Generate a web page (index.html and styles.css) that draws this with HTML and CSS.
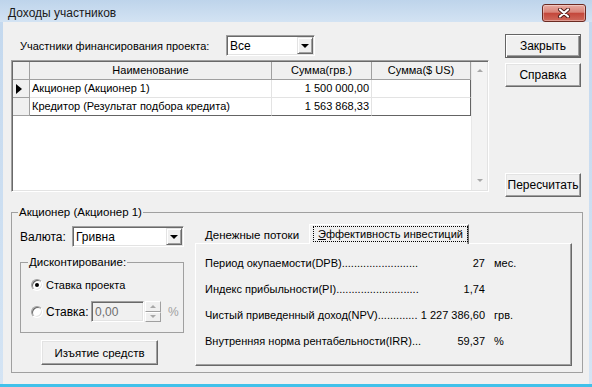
FILE: index.html
```html
<!DOCTYPE html>
<html lang="ru">
<head>
  <meta charset="utf-8">
  <title>Доходы участников</title>
  <link rel="stylesheet" href="styles.css">
</head>
<body>
  <div class="window">
    <div class="titlebar">
      <span class="title">Доходы участников</span>
      <button class="close-btn" title="Закрыть">
        <svg width="14" height="10" viewBox="0 0 14 10">
          <path d="M3 1.5 L11 8.5 M11 1.5 L3 8.5" stroke="#4a1a16" stroke-width="4" stroke-linecap="round"/>
          <path d="M3 1.5 L11 8.5 M11 1.5 L3 8.5" stroke="#fff" stroke-width="2.2" stroke-linecap="round"/>
        </svg>
      </button>
    </div>

    <div class="client">
      <div class="top">
        <div class="top-main">
          <div class="filter-row">
            <span class="filter-label">Участники финансирования проекта:</span>
            <div class="combo combo-all">
              <span class="combo-text">Все</span>
              <span class="combo-btn"><span class="arrow-down"></span></span>
            </div>
          </div>

          <div class="grid">
            <div class="grid-body">
              <div class="grid-row grid-head">
                <div class="cell ind"></div>
                <div class="cell">Наименование</div>
                <div class="cell">Сумма(грв.)</div>
                <div class="cell">Сумма($ US)</div>
              </div>
              <div class="grid-row">
                <div class="cell ind"><span class="row-mark"></span></div>
                <div class="cell name">Акционер (Акционер 1)</div>
                <div class="cell num">1 500 000,00</div>
                <div class="cell num last"></div>
              </div>
              <div class="grid-row last-row">
                <div class="cell ind"></div>
                <div class="cell name">Кредитор (Результат подбора кредита)</div>
                <div class="cell num">1 563 868,33</div>
                <div class="cell num last"></div>
              </div>
            </div>
            <div class="vscroll">
              <span class="sarrow up"></span>
              <span class="sarrow down"></span>
            </div>
          </div>
        </div>

        <div class="side">
          <button class="btn btn-default">Закрыть</button>
          <button class="btn btn-help">Справка</button>
          <button class="btn btn-recalc">Пересчитать</button>
        </div>
      </div>

      <fieldset class="group">
        <legend>Акционер (Акционер 1)</legend>

        <div class="owner-left">
          <div class="currency-row">
            <span class="currency-label">Валюта:</span>
            <div class="combo combo-currency">
              <span class="combo-text">Гривна</span>
              <span class="combo-btn"><span class="arrow-down"></span></span>
            </div>
          </div>

          <fieldset class="discount">
            <legend>Дисконтирование:</legend>
            <div class="radio-row">
              <span class="radio checked"></span>
              <span>Ставка проекта</span>
            </div>
            <div class="radio-row rate-row">
              <span class="radio"></span>
              <span class="rate-label">Ставка:</span>
              <div class="rate-edit">0,00</div>
              <div class="spin">
                <span class="spin-btn"><span class="sarrow up"></span></span>
                <span class="spin-btn"><span class="sarrow down"></span></span>
              </div>
              <span class="pct">%</span>
            </div>
          </fieldset>

          <button class="btn btn-withdraw">Изъятие средств</button>
        </div>

        <div class="tabs">
          <div class="tab-strip">
            <div class="tab"><u>Д</u>енежные потоки</div>
            <div class="tab tab-active"><span class="focus"><u>Э</u>ффективность инвестиций</span></div>
          </div>
          <div class="tab-page">
            <div class="metric">
              <span class="m-name">Период окупаемости(DPB).........................</span>
              <span class="m-val">27</span>
              <span class="m-unit">мес.</span>
            </div>
            <div class="metric">
              <span class="m-name">Индекс прибыльности(PI)...........................</span>
              <span class="m-val">1,74</span>
              <span class="m-unit"></span>
            </div>
            <div class="metric">
              <span class="m-name">Чистый приведенный доход(NPV).............</span>
              <span class="m-val">1 227 386,60</span>
              <span class="m-unit">грв.</span>
            </div>
            <div class="metric">
              <span class="m-name">Внутренняя норма рентабельности(IRR)...</span>
              <span class="m-val">59,37</span>
              <span class="m-unit">%</span>
            </div>
          </div>
        </div>
      </fieldset>
    </div>
  </div>
</body>
</html>
```

FILE: styles.css
```css
body {
  margin: 0;
  font-family: "Liberation Sans", Arial, sans-serif;
  font-size: 11px;
  color: #000;
}

.window {
  width: 592px;
  height: 387px;
  box-sizing: border-box;
  display: flex;
  flex-direction: column;
  background: linear-gradient(#c3d8ee, #d4e4f4);
  border-bottom: 3px solid #41c1ea;
}

/* title bar */

.titlebar {
  height: 22px;
  flex: none;
  display: flex;
  align-items: flex-start;
  padding: 0 6px 0 8px;
  background: linear-gradient(#bed4eb, #d3e3f3);
}

.title {
  font-size: 12px;
  line-height: 27px;
  color: #1a1a1a;
}

.close-btn {
  margin: 4px 0 0 auto;
  width: 44px;
  height: 18px;
  padding: 0;
  border: 1px solid #6b2a22;
  border-radius: 3px;
  background: linear-gradient(#e8aca2 0%, #d98479 45%, #c4473b 52%, #cf6a5c 100%);
  box-shadow: inset 0 0 0 1px rgba(255, 255, 255, 0.35);
  display: flex;
  align-items: center;
  justify-content: center;
}

/* client area */

.client {
  flex: 1;
  margin: 0 3px;
  background: #f0f0f0;
  padding: 12px 8px 0 8px;
}

.top {
  display: flex;
  align-items: flex-start;
  gap: 16px;
}

.top-main {
  width: 478px;
}

.filter-row {
  display: flex;
  align-items: center;
  height: 21px;
  margin: 1px 0 4px 0;
}

.filter-label {
  width: 215px;
  padding-left: 9px;
  box-sizing: border-box;
}

/* combobox */

.combo {
  height: 21px;
  box-sizing: border-box;
  display: flex;
  align-items: center;
  background: #fff;
  border: 1px solid;
  border-color: #a0a0a0 #fff #fff #a0a0a0;
  box-shadow: inset 1px 1px #696969, inset -1px -1px #e3e3e3;
  padding: 1px 1px 1px 2px;
}

.combo-all {
  width: 89px;
}

.combo-text {
  flex: 1;
  padding-left: 1px;
  font-size: 12px;
}

.combo-btn {
  width: 16px;
  height: 17px;
  box-sizing: border-box;
  background: #f0f0f0;
  border: 1px solid;
  border-color: #e3e3e3 #696969 #696969 #e3e3e3;
  box-shadow: inset 1px 1px #fff, inset -1px -1px #a0a0a0;
  display: flex;
  align-items: center;
  justify-content: center;
}

.arrow-down {
  width: 0;
  height: 0;
  border-left: 4px solid transparent;
  border-right: 4px solid transparent;
  border-top: 4px solid #000;
  margin-top: 1px;
}

/* data grid */

.grid {
  height: 132px;
  box-sizing: border-box;
  display: flex;
  background: #fff;
  border: 1px solid;
  border-color: #a0a0a0 #fff #fff #a0a0a0;
  box-shadow: inset 1px 1px #696969, inset -1px -1px #e3e3e3;
  padding: 1px;
}

.grid-body {
  flex: 1;
}

.grid-row {
  display: grid;
  grid-template-columns: 17px 242px 100px 99px;
  height: 18px;
}

.cell {
  box-sizing: border-box;
  border-right: 1px solid #e3e3e3;
  border-bottom: 1px solid #e3e3e3;
  line-height: 17px;
  white-space: nowrap;
  overflow: hidden;
}

.grid-head .cell {
  background: #f0f0f0;
  border-color: #a0a0a0;
  text-align: center;
}

.cell.ind {
  background: #f0f0f0;
  border-color: #a0a0a0;
  display: flex;
  align-items: center;
  padding-left: 3px;
}

.cell.name {
  padding-left: 2px;
}

.cell.num {
  text-align: right;
  padding-right: 2px;
}

.cell.last {
  border-right-color: #646464;
}

.last-row .cell {
  border-bottom-color: #646464;
}

.last-row .cell.ind {
  border-bottom-color: #a0a0a0;
}

.row-mark {
  width: 0;
  height: 0;
  border-top: 5px solid transparent;
  border-bottom: 5px solid transparent;
  border-left: 6px solid #000;
}

.vscroll {
  width: 16px;
  background: #f3f3f3;
  border-left: 1px solid #e8e8e8;
  display: flex;
  flex-direction: column;
  justify-content: space-between;
  align-items: center;
  padding: 7px 0 8px 0;
}

.sarrow {
  width: 0;
  height: 0;
  border-left: 3px solid transparent;
  border-right: 3px solid transparent;
}

.sarrow.up {
  border-bottom: 3px solid #a8a8a8;
}

.sarrow.down {
  border-top: 3px solid #a8a8a8;
}

/* buttons */

.side {
  width: 76px;
  height: 163px;
  display: flex;
  flex-direction: column;
}

.btn {
  height: 24px;
  box-sizing: border-box;
  padding: 0;
  font-family: inherit;
  font-size: 12px;
  color: #000;
  background: #f0f0f0;
  border: 1px solid;
  border-color: #fff #696969 #696969 #fff;
  box-shadow: inset -1px -1px #a0a0a0, inset 1px 1px #e3e3e3;
}

.btn-default {
  border-color: #646464;
  box-shadow: inset 1px 1px #fff, inset -1px -1px #696969, inset -2px -2px #a0a0a0;
}

.btn-help {
  margin-top: 5px;
}

.btn-recalc {
  margin-top: auto;
}

/* group box */

.group {
  margin: 8px 0 0 0;
  width: 572px;
  box-sizing: border-box;
  padding: 0 0 6px 0;
  border: 1px solid #a0a0a0;
  display: flex;
  min-inline-size: 0;
}

.group > legend {
  padding: 0 1px;
  margin-left: 6px;
  line-height: 14px;
  font-size: 11.5px;
}

.owner-left {
  width: 164px;
  margin-left: 8px;
  padding-top: 7px;
}

.currency-row {
  display: flex;
  align-items: center;
}

.currency-label {
  width: 52px;
  font-size: 12px;
}

.combo-currency {
  width: 112px;
}

.discount {
  margin: 8px 0 0 0;
  padding: 0 0 10px 0;
  border: 1px solid #a0a0a0;
  min-inline-size: 0;
}

.discount > legend {
  padding: 0 1px;
  margin-left: 7px;
  line-height: 14px;
  font-size: 11.5px;
}

.radio-row {
  display: flex;
  align-items: center;
  height: 18px;
  margin: 7px 0 0 10px;
  font-size: 11px;
}

.rate-row {
  height: 21px;
}

.radio {
  width: 12px;
  height: 12px;
  box-sizing: border-box;
  border-radius: 50%;
  border: 1px solid;
  border-color: #a0a0a0 #fff #fff #a0a0a0;
  background: #fff;
  box-shadow: inset 1px 1px #696969, inset -1px -1px #e3e3e3;
  margin-right: 3px;
  display: flex;
  align-items: center;
  justify-content: center;
}

.radio.checked::after {
  content: "";
  width: 4px;
  height: 4px;
  border-radius: 50%;
  background: #000;
}

.rate-label {
  width: 45px;
  font-size: 12px;
}

.rate-edit {
  width: 53px;
  height: 21px;
  box-sizing: border-box;
  background: #f0f0f0;
  color: #6d6d6d;
  font-size: 12px;
  border: 1px solid;
  border-color: #a0a0a0 #fff #fff #a0a0a0;
  box-shadow: inset 1px 1px #696969, inset -1px -1px #e3e3e3;
  padding: 3px 0 0 3px;
}

.spin {
  width: 16px;
  height: 21px;
  margin-left: 1px;
  display: flex;
  flex-direction: column;
}

.spin-btn {
  flex: 1;
  box-sizing: border-box;
  background: #f0f0f0;
  border: 1px solid;
  border-color: #fff #a0a0a0 #a0a0a0 #fff;
  display: flex;
  align-items: center;
  justify-content: center;
}

.pct {
  margin-left: 7px;
  color: #a0a0a0;
  font-size: 12px;
}

.btn-withdraw {
  margin: 7px 0 0 21px;
  width: 117px;
  height: 25px;
  font-size: 11.5px;
}

/* tabs */

.tabs {
  width: 377px;
  margin-left: 11px;
  padding-top: 5px;
  font-size: 11px;
}

.tab-strip {
  display: flex;
  height: 19px;
  align-items: flex-end;
}

.tab {
  height: 17px;
  line-height: 17px;
  white-space: nowrap;
}

.tab:first-child {
  width: 112px;
  padding: 1px 0 0 10px;
  box-sizing: border-box;
  font-size: 11.5px;
}

.tab-active {
  width: 160px;
  height: 20px;
  box-sizing: border-box;
  margin: 0 0 -1px 2px;
  position: relative;
  background: #f0f0f0;
  border-top: 1px solid #fff;
  border-left: 1px solid #fff;
  border-right: 1px solid #696969;
  box-shadow: inset -1px 0 #a0a0a0;
  padding: 1px 0 0 3px;
}

.focus {
  display: inline-block;
  line-height: 14px;
  padding: 0 4px;
  border: 1px dotted #000;
}

.tab-page {
  height: 123px;
  box-sizing: border-box;
  border: 1px solid;
  border-color: #fff #696969 #696969 #fff;
  box-shadow: inset -1px -1px #a0a0a0;
  padding: 6px 0 0 9px;
}

.metric {
  display: grid;
  grid-template-columns: 210px 70px auto;
  height: 26px;
  align-items: center;
}

.m-name {
  white-space: nowrap;
}

.m-val {
  text-align: right;
}

.m-unit {
  padding-left: 9px;
}
```
